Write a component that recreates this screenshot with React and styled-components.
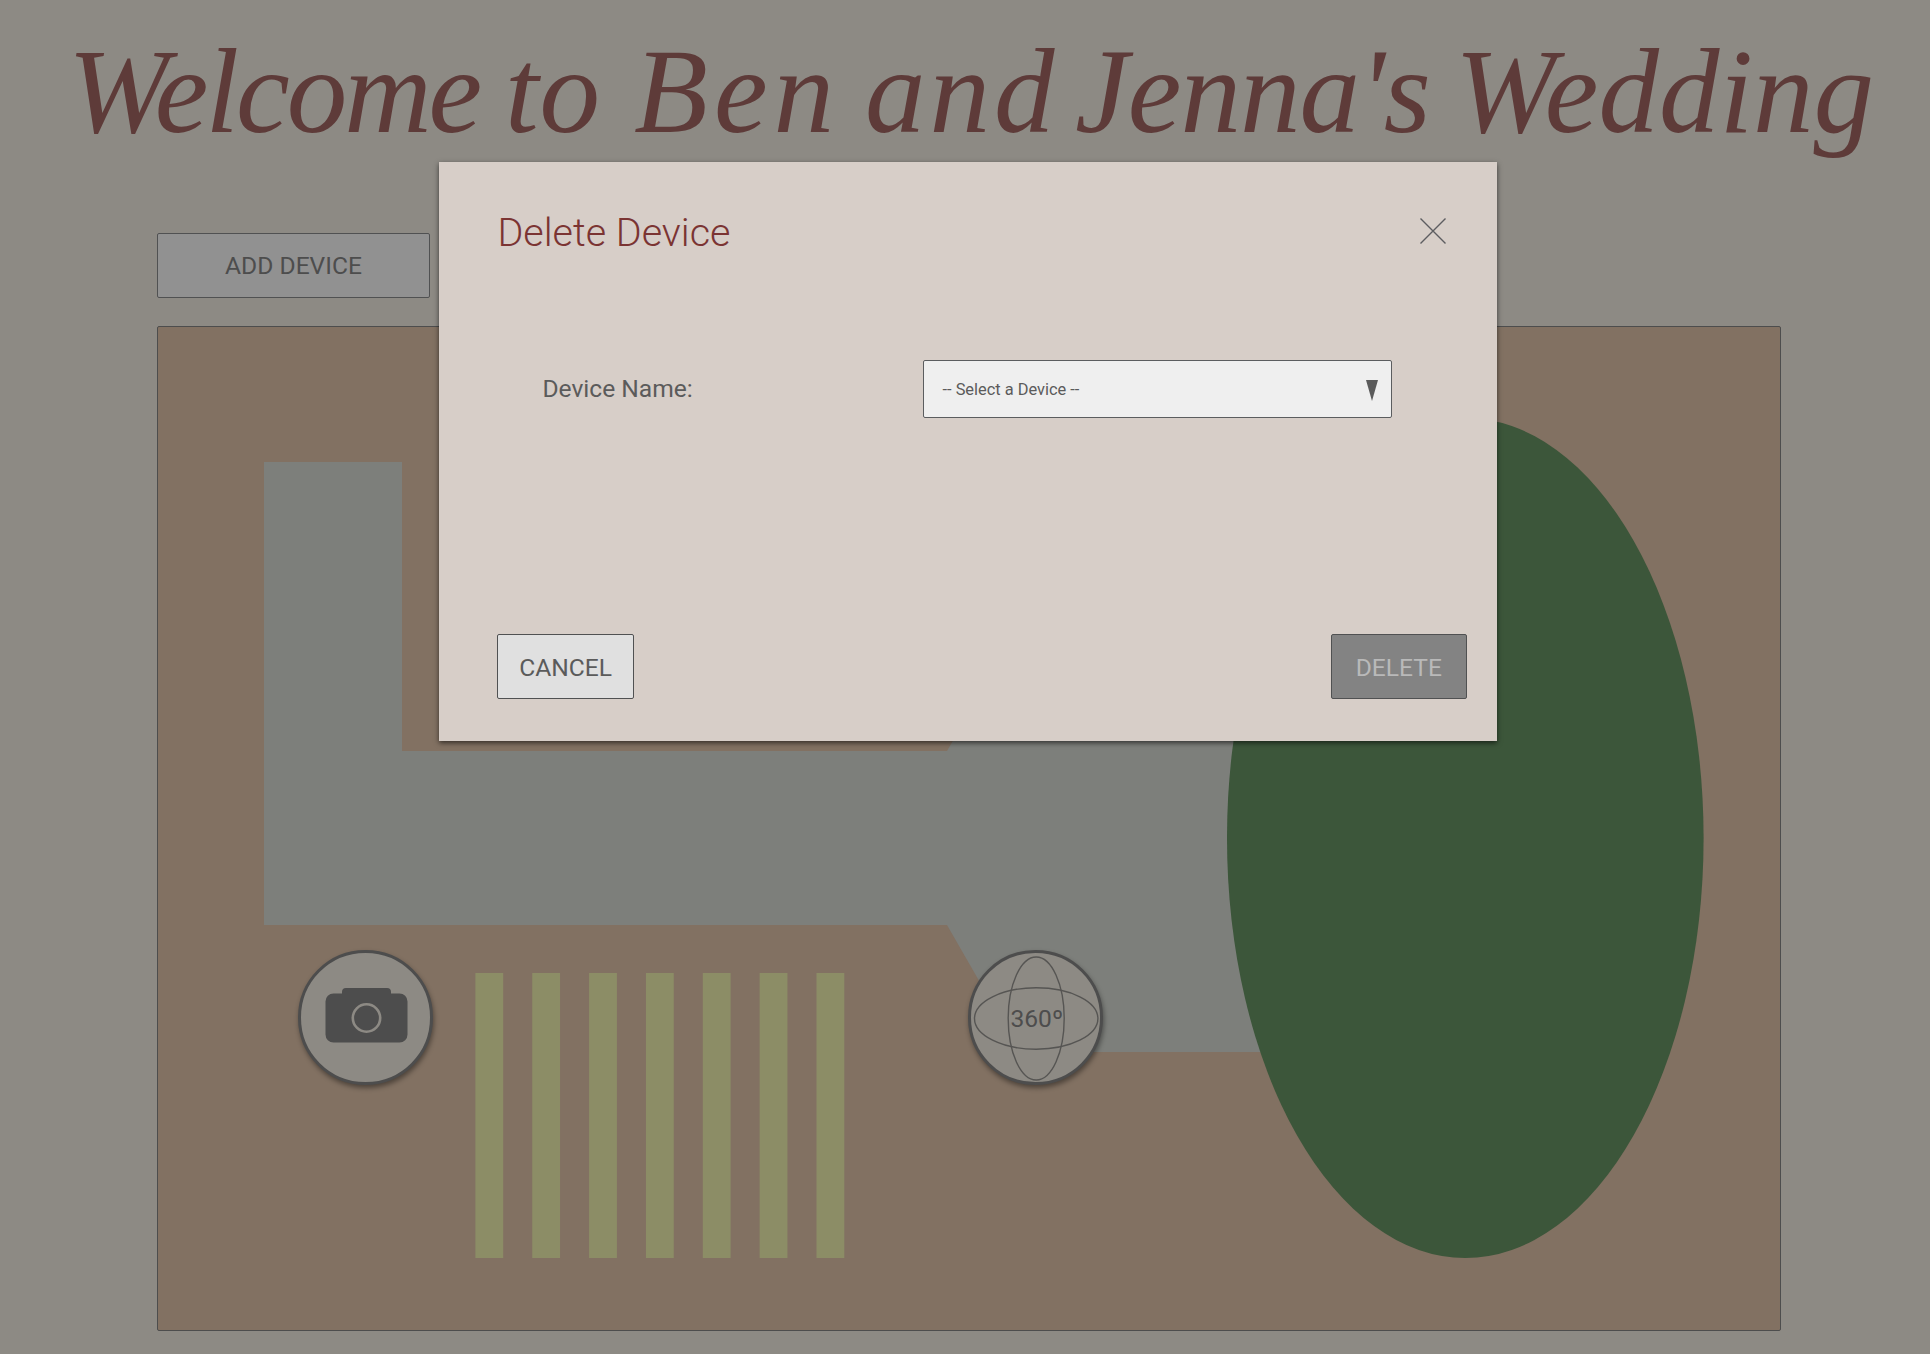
import React from "react";
import styled, { createGlobalStyle } from "styled-components";

const Global = createGlobalStyle`
  * { box-sizing: border-box; }
  html, body { margin: 0; background: #8d8a84; overflow: hidden; }
  body { font-family: Roboto, "Liberation Sans", sans-serif; color: #4d4d4d; }
`;

const Page = styled.div`
  position: relative;
  width: 1930px;
  height: 1354px;
  padding: 0 149px 0 157px;
  display: flex;
  flex-direction: column;
  overflow: hidden;
`;

const Heading = styled.h1`
  display: flex;
  margin: 0 -149px 0 -157px;
  padding-left: 68px;
  height: 233px;
  padding-top: 22px;
  font: italic 400 121px/138px "Liberation Serif", serif;
  color: #5e3b39;
  white-space: nowrap;
`;

const Word = styled.span`
  flex: 0 0 ${(p) => p.$width}px;
  min-width: 0;
  letter-spacing: ${(p) => p.$tracking}px;
`;

const Button = styled.button`
  display: flex;
  align-items: center;
  justify-content: center;
  flex: none;
  width: ${(p) => p.$width}px;
  height: ${(p) => p.$height}px;
  padding: ${(p) => p.$drop || 0}px 0 0;
  border: 1.4px solid #505152;
  border-radius: 2px;
  background: ${(p) => p.$fill};
  color: ${(p) => p.$ink};
  font: 400 24.6px/28px Roboto, sans-serif;
`;

const Board = styled.main`
  position: relative;
  width: 1624px;
  height: 1005px;
  margin-top: 28px;
  border: 1px solid #4d4d4d;
  border-radius: 2px;
  background: #827162;
`;

const FloorPlan = styled.svg`
  display: block;
  width: 1622px;
  height: 1003px;
`;

const Pin = styled.div`
  position: absolute;
  left: ${(p) => p.$x}px;
  top: ${(p) => p.$y}px;
  width: 134.5px;
  height: 134.5px;
  border: 3px solid #4d4d4d;
  border-radius: 50%;
  background: #8d8a84;
  box-shadow: 1px 3px 5px rgba(0, 0, 0, 0.4);
  svg { display: block; width: 129px; height: 129px; }
`;

const Overlay = styled.div`
  position: absolute;
  inset: 0;
  display: flex;
  align-items: flex-start;
  padding: 162px 0 0 439px;
`;

const Dialog = styled.section`
  display: flex;
  flex-direction: column;
  justify-content: space-between;
  width: 1058px;
  height: 579px;
  padding: 46px 30px 42px 58.4px;
  background: #d7cec8;
  box-shadow: 0 2px 5px rgba(0, 0, 0, 0.6);
`;

const DialogHead = styled.header`
  display: flex;
  justify-content: space-between;
  height: 50px;
  padding-right: 21.5px;
`;

const DialogTitle = styled.h2`
  margin: 0;
  font: 300 39.5px/50px Roboto, sans-serif;
  color: #7b3433;
`;

const CloseIcon = styled.svg`
  width: 26px;
  height: 26px;
  margin-top: 10px;
`;

const Field = styled.div`
  display: flex;
  align-items: center;
  justify-content: space-between;
  height: 58px;
  margin: -114px 75.5px 0 45px;
`;

const Label = styled.label`
  font-size: 24.6px;
  line-height: 28px;
  color: #5b5b5b;
`;

const Select = styled.div`
  display: flex;
  align-items: center;
  justify-content: space-between;
  width: 469px;
  height: 58px;
  padding: 0 13px 0 19px;
  border: 1.4px solid #5b5d5f;
  border-radius: 2px;
  background: #efefef;
  color: #5b5b5b;
  font-size: 16.4px;
`;

const Arrow = styled.svg`
  width: 12px;
  height: 21px;
  margin-top: 2px;
`;

const Actions = styled.footer`
  display: flex;
  justify-content: space-between;
`;

const words = [
  ["Welcome", 437, -3],
  ["to", 129, 1],
  ["Ben", 231, 6],
  ["and", 210, 4],
  ["Jenna's", 380, -1],
  ["Wedding", 430, 0],
];

const stripes = [0, 1, 2, 3, 4, 5, 6];

export default function App() {
  return (
    <Page>
      <Global />
      <Heading>
        {words.map(([text, width, tracking]) => (
          <Word key={text} $width={width} $tracking={tracking}>{text}</Word>
        ))}
      </Heading>
      <Button $width={273} $height={65} $fill="#919191" $ink="#4d4d4d">ADD DEVICE</Button>
      <Board>
        <FloorPlan viewBox="158 327 1622 1003">
          <path d="M264 462H402V751H947L1020 624H1480V1052H1020L947 925H264Z" fill="#7d7f7b" />
          <ellipse cx="1465.3" cy="838" rx="238.3" ry="420" fill="#3c563a" />
          {stripes.map((i) => (
            <rect key={i} x={475.4 + i * 56.85} y="973" width="27.8" height="285" fill="#8c8d66" />
          ))}
        </FloorPlan>
        <Pin $x={140} $y={623}>
          <svg viewBox="301 953 129 129">
            <path d="M342 993.5V992a4 4 0 0 1 4-4H387a4 4 0 0 1 4 4V993.5H399.500a8 8 0 0 1 8 8V1034.500a8 8 0 0 1-8 8H333.500a8 8 0 0 1-8-8V1001.500a8 8 0 0 1 8-8Z" fill="#4d4d4d" />
            <circle cx="366.500" cy="1018" r="13.700" fill="none" stroke="#8d8a84" strokeWidth="2.600" />
          </svg>
        </Pin>
        <Pin $x={810} $y={623}>
          <svg viewBox="971 953 129 129">
            <g fill="none" stroke="#565553" strokeWidth="1.400">
              <ellipse cx="1036.200" cy="1018.500" rx="61.700" ry="30.700" />
              <ellipse cx="1036.200" cy="1018.500" rx="28" ry="61.500" />
            </g>
            <text x="1036.800" y="1027" textAnchor="middle" fontFamily="Roboto" fontSize="24.600" fill="#4d4d4d">360º</text>
          </svg>
        </Pin>
      </Board>
      <Overlay>
        <Dialog>
          <DialogHead>
            <DialogTitle>Delete Device</DialogTitle>
            <CloseIcon viewBox="0 0 26 26" stroke="#5d5d60" strokeWidth="1.400">
              <path d="M.5.500 25.500 25.500M25.500.500.500 25.500" />
            </CloseIcon>
          </DialogHead>
          <Field>
            <Label>Device Name:</Label>
            <Select>
              -- Select a Device --
              <Arrow viewBox="0 0 12 21"><path d="M0 0H12L6 21Z" fill="#5b5b5b" /></Arrow>
            </Select>
          </Field>
          <Actions>
            <Button $width={136.500} $height={65} $drop={2} $fill="#e0e0e0" $ink="#5b5b5b">CANCEL</Button>
            <Button $width={136.500} $height={65} $drop={2} $fill="#838383" $ink="#b9b9b9">DELETE</Button>
          </Actions>
        </Dialog>
      </Overlay>
    </Page>
  );
}
